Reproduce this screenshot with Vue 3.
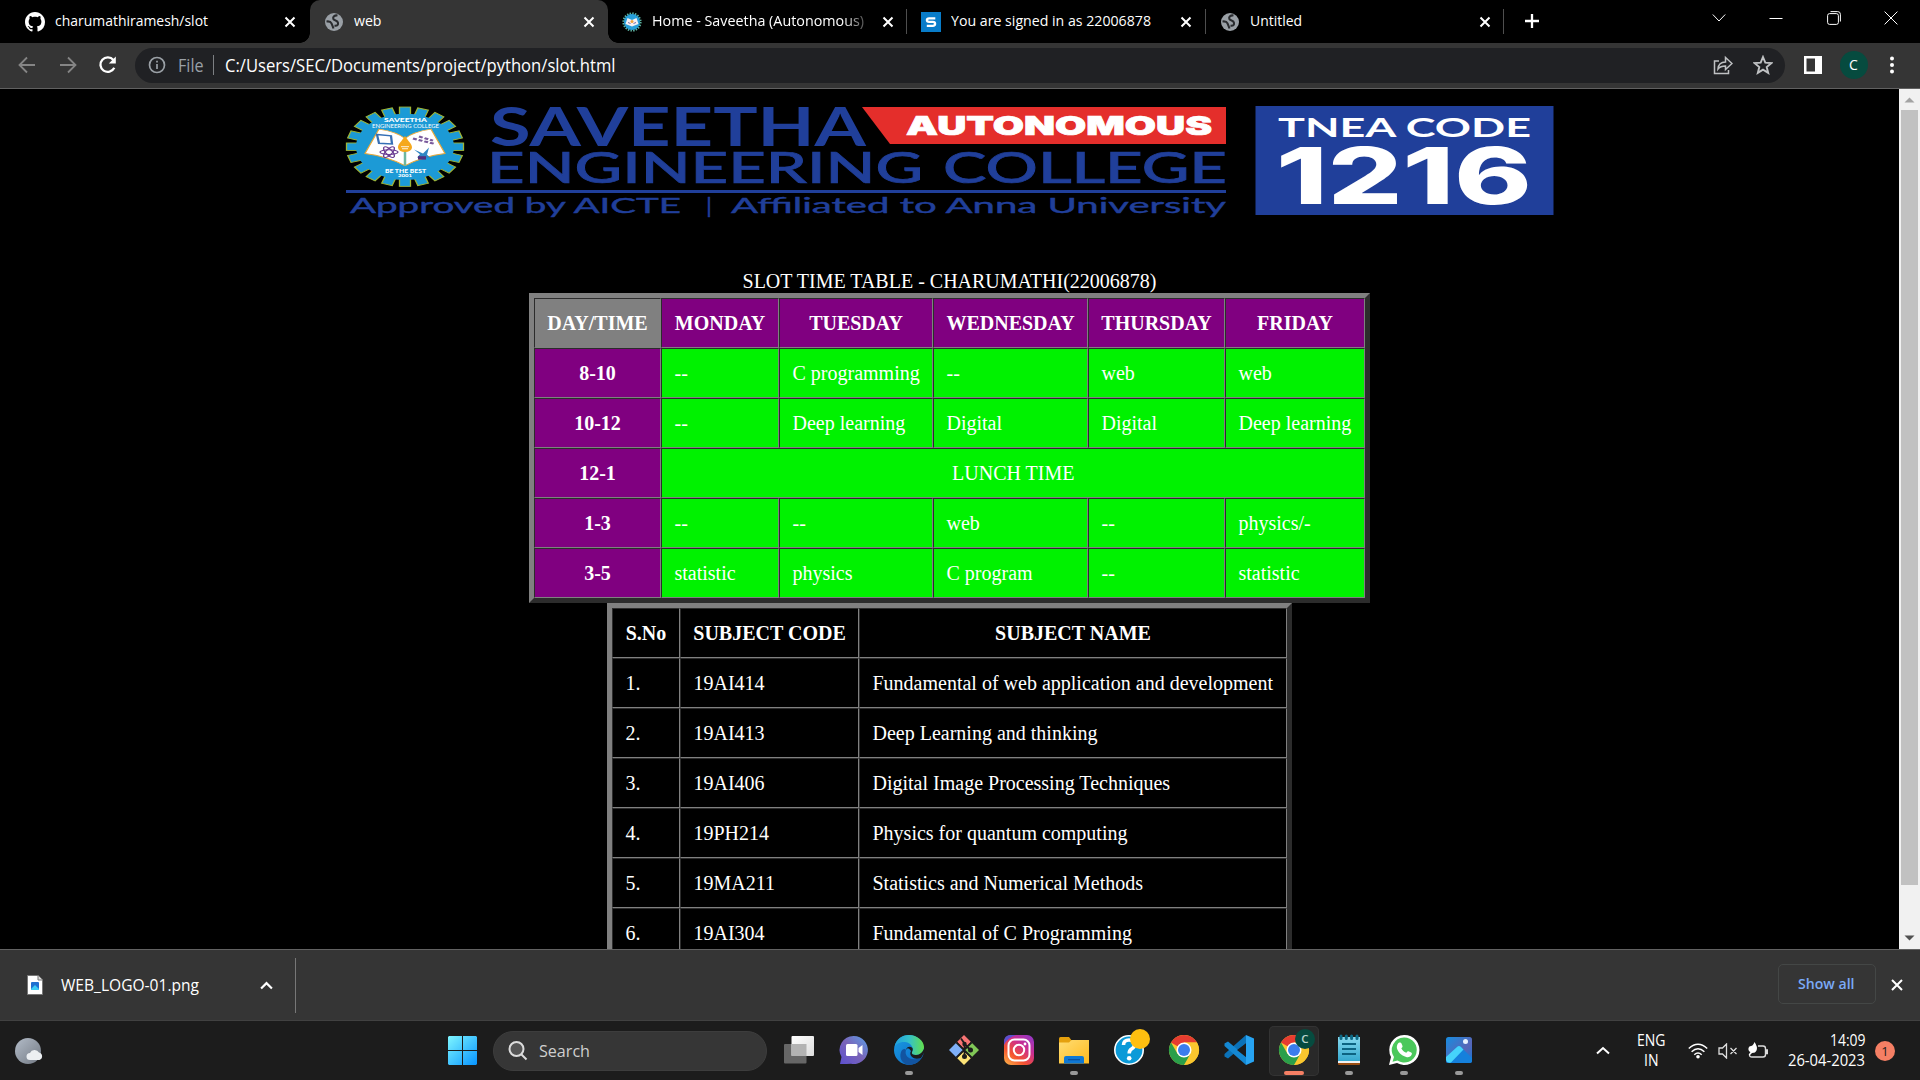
<script setup>
import { h } from 'vue'

// Single-line label whose rendered width is fixed, so UI captions never reflow.
const Label = (p) =>
  h('svg', { width: p.w, height: 24, viewBox: `0 0 ${p.w} 24`, style: { display: 'block', flex: 'none', overflow: 'visible' } }, [
    h('text', {
      x: 0, y: p.y || 17, textLength: p.w, lengthAdjust: 'spacingAndGlyphs',
      'font-size': p.size || 15, 'font-weight': p.weight || 400, fill: p.fill || '#fff',
      'font-family': "'Open Sans', 'Noto Sans', sans-serif"
    }, p.text)
  ])
Label.props = ['text', 'w', 'size', 'weight', 'fill', 'y']

const tabs = [
  { icon: 'github', title: 'charumathiramesh/slot', w: 153 },
  { icon: 'globe', title: 'web', w: 27.5, active: true },
  { icon: 'gear', title: 'Home - Saveetha (Autonomous)', w: 212, fade: true },
  { icon: 's', title: 'You are signed in as 22006878', w: 200, sep: true },
  { icon: 'globe', title: 'Untitled', w: 52, sep: true }
]

const days = ['MONDAY', 'TUESDAY', 'WEDNESDAY', 'THURSDAY', 'FRIDAY']
const slots = [
  ['8-10', '--', 'C programming', '--', 'web', 'web'],
  ['10-12', '--', 'Deep learning', 'Digital', 'Digital', 'Deep learning'],
  ['12-1', 'LUNCH TIME'],
  ['1-3', '--', '--', 'web', '--', 'physics/-'],
  ['3-5', 'statistic', 'physics', 'C program', '--', 'statistic']
]
const slotCols = [127, 118, 154, 155, 137, 140]
const subjectCols = [68, 179, 428]
const subjects = [
  ['1.', '19AI414', 'Fundamental of web application and development'],
  ['2.', '19AI413', 'Deep Learning and thinking'],
  ['3.', '19AI406', 'Digital Image Processing Techniques'],
  ['4.', '19PH214', 'Physics for quantum computing'],
  ['5.', '19MA211', 'Statistics and Numerical Methods'],
  ['6.', '19AI304', 'Fundamental of C Programming']
]

const teeth = Array.from({ length: 20 }, (_, i) => i * 18)

const apps = [
  { id: 'taskview' }, { id: 'teams' }, { id: 'edge', run: true }, { id: 'git' },
  { id: 'insta' }, { id: 'folder', run: true }, { id: 'help' }, { id: 'chrome' },
  { id: 'code' }, { id: 'chrome', active: true }, { id: 'notes', run: true },
  { id: 'whatsapp', run: true }, { id: 'photos', run: true }
]
</script>

<template>
  <div class="screen">
    <header class="strip">
      <div v-for="(t, i) in tabs" :key="i" class="tab" :class="{ active: t.active, sep: t.sep }">
        <svg v-if="t.icon === 'github'" class="fav" viewBox="0 0 16 16" fill="#fff"><path d="M8 0C3.58 0 0 3.58 0 8c0 3.54 2.29 6.53 5.47 7.59.4.07.55-.17.55-.38 0-.19-.01-.82-.01-1.49-2.01.37-2.53-.49-2.69-.94-.09-.23-.48-.94-.82-1.13-.28-.15-.68-.52-.01-.53.63-.01 1.08.58 1.23.82.72 1.21 1.87.87 2.33.66.07-.52.28-.87.51-1.07-1.78-.2-3.64-.89-3.64-3.95 0-.87.31-1.59.82-2.15-.08-.2-.36-1.02.08-2.12 0 0 .67-.21 2.2.82.64-.18 1.32-.27 2-.27s1.36.09 2 .27c1.53-1.04 2.2-.82 2.2-.82.44 1.1.16 1.92.08 2.12.51.56.82 1.27.82 2.15 0 3.07-1.87 3.75-3.65 3.95.29.25.54.73.54 1.48 0 1.07-.01 1.93-.01 2.2 0 .21.15.46.55.38A8 8 0 0 0 16 8c0-4.42-3.58-8-8-8Z" /></svg>
        <svg v-else-if="t.icon === 'globe'" class="fav" viewBox="0 0 20 20"><circle cx="10" cy="10" r="9" fill="#9aa0a6" /><path d="M2.500 9.500Q6.500 9 7.500 11.300T9.500 16.500M13.500 3.500C11 3 8.500 4.500 9.300 6.800S13.600 8 14 10.800 12.500 14 10.500 13.500" fill="none" stroke="#2a2c2f" stroke-width="2.100" /></svg>
        <svg v-else-if="t.icon === 'gear'" class="fav" viewBox="0 0 20 20"><circle cx="10" cy="10" r="8.600" fill="none" stroke="#5cb3a0" stroke-width="2" stroke-dasharray="1.500 1.200" /><circle cx="10" cy="10" r="8" fill="#279fda" /><path d="m3.500 12 2-6L10 8l4.500-2 2 6-6.500 2.500z" fill="#f6f0f2" /><circle cx="10" cy="9.500" r="1.500" fill="#f2a43a" /><path d="M6 10.500l2.500 1M14 10.500l-2.500 1" stroke="#7a6ba8" /></svg>
        <svg v-else class="fav" viewBox="0 0 20 20"><rect width="20" height="20" fill="#087cc9" /><path d="M14.300 6.300H8.200c-1.500 0-2.300.6-2.300 1.800s.8 1.800 2.200 1.800h3.800c1.400 0 2.200.6 2.200 1.900s-.9 2-2.400 2H5.800" fill="none" stroke="#fff" stroke-width="2.300" /></svg>
        <div class="title" :class="{ fade: t.fade }"><Label :text="t.title" :w="t.w" :y="16.300" /></div>
        <svg class="x" viewBox="0 0 12 12"><path d="M1.500 1.500l9 9M10.500 1.500l-9 9" /></svg>
      </div>
      <svg class="plus" viewBox="0 0 16 16"><path d="M8 1v14M1 8h14" /></svg>
      <div class="win">
        <svg viewBox="0 0 14 14"><path d="M.8 3.500 7 10l6.200-6.500" /></svg>
        <svg viewBox="0 0 14 14"><path d="M.5 7.500h13" /></svg>
        <svg viewBox="0 0 14 14"><rect x=".6" y="2.600" width="10.800" height="10.800" rx="2" /><path d="M3.500.6h7.200q2.700 0 2.700 2.700v7.200" /></svg>
        <svg viewBox="0 0 14 14"><path d="M.6.6l12.800 12.800M13.400.6.6 13.400" /></svg>
      </div>
    </header>

    <div class="toolbar">
      <svg class="nav dim" viewBox="0 0 20 20"><path d="M18 10H3M10 2.500 2.500 10l7.500 7.500" /></svg>
      <svg class="nav dim" viewBox="0 0 20 20"><path d="M2 10h15M10 2.500l7.500 7.500-7.500 7.500" /></svg>
      <svg class="nav" viewBox="0 0 20 20"><path d="M16.300 12.800A7.300 7.300 0 1 1 15.400 5" stroke-width="2.300" /><path d="M17.800 1.500v7h-7z" fill="#fff" stroke="none" /></svg>
      <div class="omni">
        <svg class="info" viewBox="0 0 18 18"><circle cx="9" cy="9" r="7.500" /><path d="M9 8v5M9 4.800v1.800" /></svg>
        <Label text="File" :w="25.500" :size="17.500" :y="18.500" fill="#9aa0a6" />
        <i class="bar"></i>
        <Label text="C:/Users/SEC/Documents/project/python/slot.html" :w="390.500" :size="17.500" :y="18.500" />
        <svg class="share" viewBox="0 0 20 20"><path d="M6 6H1.500v12.500h14V15" /><path d="M5 14c.4-5 3.500-7 7.500-7V2.500L19 8.500l-6.500 6V11c-3 0-5.500.5-7.500 3z" /></svg>
        <svg class="star" viewBox="0 0 20 20"><path d="m10 2 2.300 5.600 6 .5-4.600 3.900 1.500 5.900L10 14.700l-5.200 3.200L6.300 12 1.700 8.100l6-.5z" /></svg>
      </div>
      <svg class="panel" viewBox="0 0 18 18"><path fill="#fff" fill-rule="evenodd" d="M0 0h18v18H0zM2.500 2.500v13h8.500v-13z" /></svg>
      <span class="avatar">C</span>
      <svg class="dots" viewBox="0 0 4 18"><circle cx="2" cy="2.500" r="2" /><circle cx="2" cy="9" r="2" /><circle cx="2" cy="15.500" r="2" /></svg>
    </div>

    <div class="view">
      <main class="page">
        <svg class="banner" viewBox="345 105 1210 114" width="1210" height="114">
          <g transform="translate(405 146.700) scale(1 .678)">
            <rect v-for="a in teeth" :key="a" x="-5.500" y="-58.500" width="11" height="15" :transform="`rotate(${a})`" fill="#1c9ad6" stroke="#9fb536" stroke-width="1.300" />
            <circle r="49" fill="#1c9ad6" />
            <path d="M-40 10-26-26Q-8-22 0-12 8-22 26-26L40 10Q18 14 0 28-18 14-40 10z" fill="#fff" stroke="#e8a83a" stroke-width="1.200" />
            <path d="M0-12V28" stroke="#6db7a0" stroke-width="2.500" />
            <path d="M0-16C3-8 7-4 7 1A7 7 0 0 1-7 1C-7-4-3-8 0-16z" fill="#f5a81c" />
            <path d="M-4 0h8M-3 3h6" stroke="#fff" />
            <path d="m-28-18 14 2 1 12-13-1z" fill="#fff" stroke="#356fb5" stroke-width="2.300" />
            <g fill="none" stroke="#6c3d93" stroke-width="1.400"><ellipse cx="-16" cy="8" rx="9" ry="3.500" /><ellipse cx="-16" cy="8" rx="9" ry="3.500" transform="rotate(60 -16 8)" /><ellipse cx="-16" cy="8" rx="9" ry="3.500" transform="rotate(120 -16 8)" /></g>
            <path d="M8-12l22 8M14-15l14 6" stroke="#7a5a9c" stroke-width="3" stroke-dasharray="4 2" />
            <path d="m9 4 9 6 6-9-2 11 4 5-14-1 3-5z" fill="#2f86c4" /><path d="M13 14h8v5h-8z" fill="#51307f" />
          </g>
          <g fill="#fff" font-family="Lato, sans-serif" font-weight="900">
            <text x="384" y="122.300" font-size="6.200" textLength="43" lengthAdjust="spacingAndGlyphs">SAVEETHA</text>
            <text x="372" y="127.600" font-size="4.800" font-weight="400" textLength="67" lengthAdjust="spacingAndGlyphs">ENGINEERING COLLEGE</text>
            <text x="385" y="172.500" font-size="5" textLength="41" lengthAdjust="spacingAndGlyphs">BE THE BEST</text>
            <text x="398" y="177" font-size="4.500" textLength="14" lengthAdjust="spacingAndGlyphs">2001</text>
          </g>
          <g fill="#203f9a" font-family="Lato, sans-serif">
            <text x="490" y="145.600" font-size="53" font-weight="700" textLength="376" lengthAdjust="spacingAndGlyphs">SAVEETHA</text>
            <g font-size="43" font-weight="500" stroke="#203f9a" stroke-width=".7">
              <text x="487" y="182.800" textLength="436" lengthAdjust="spacingAndGlyphs">ENGINEERING</text>
              <text x="943" y="182.800" textLength="284" lengthAdjust="spacingAndGlyphs">COLLEGE</text>
            </g>
            <rect x="346" y="190" width="880" height="3" />
            <g font-size="20.500" stroke="#203f9a" stroke-width=".4">
              <text x="350" y="212.500" textLength="331" lengthAdjust="spacingAndGlyphs">Approved by AICTE</text>
              <text x="706" y="212.500" textLength="6" lengthAdjust="spacingAndGlyphs">|</text>
              <text x="731" y="212.500" textLength="495" lengthAdjust="spacingAndGlyphs">Affiliated to Anna University</text>
            </g>
          </g>
          <path d="M862 107h364v37H890z" fill="#e42e2b" />
          <text x="906" y="134.800" font-size="26" font-weight="900" font-family="Inter, sans-serif" fill="#fff" stroke="#fff" stroke-width=".7" textLength="306" lengthAdjust="spacingAndGlyphs">AUTONOMOUS</text>
          <rect x="1255.500" y="106" width="298" height="109" fill="#203f9a" />
          <text x="1278" y="136.800" font-size="26" font-weight="700" font-family="Lato, sans-serif" fill="#fff" textLength="253" lengthAdjust="spacingAndGlyphs">TNEA CODE</text>
          <text x="1276" y="203.500" font-size="78" font-weight="800" font-family="Inter, sans-serif" fill="#fff" textLength="256" lengthAdjust="spacingAndGlyphs">1216</text>
        </svg>

        <table class="slots">
          <caption>SLOT TIME TABLE - CHARUMATHI(22006878)</caption>
          <colgroup><col v-for="(w, i) in slotCols" :key="i" :style="{ width: w + 'px' }" /></colgroup>
          <tbody>
            <tr><th class="corner">DAY/TIME</th><th v-for="d in days" :key="d">{{ d }}</th></tr>
            <tr v-for="r in slots" :key="r[0]">
              <th>{{ r[0] }}</th>
              <td v-for="(c, i) in r.slice(1)" :key="i" :colspan="r.length === 2 ? 5 : 1" :class="{ lunch: r.length === 2 }">{{ c }}</td>
            </tr>
          </tbody>
        </table>

        <table class="subjects">
          <colgroup><col v-for="(w, i) in subjectCols" :key="i" :style="{ width: w + 'px' }" /></colgroup>
          <tbody>
            <tr><th>S.No</th><th>SUBJECT CODE</th><th>SUBJECT NAME</th></tr>
            <tr v-for="r in subjects" :key="r[0]"><td v-for="c in r" :key="c">{{ c }}</td></tr>
          </tbody>
        </table>
      </main>
      <div class="scroll">
        <svg viewBox="0 0 21 21"><path d="M5.500 13.500h10l-5-5z" fill="#a3a3a3" /></svg>
        <i></i>
        <svg viewBox="0 0 21 21"><path d="M5.500 7.500h10l-5 5z" fill="#505050" /></svg>
      </div>
    </div>

    <div class="downloads">
      <svg class="file" viewBox="0 0 16 20"><path d="M.5.5h10.500l4.500 4.500v14.500H.5z" fill="#fff" stroke="#777" /><path d="M11 .5v4.500h4.500" fill="#ddd" stroke="#777" /><rect x="4" y="7" width="8" height="8" rx="1" fill="#1f6fd0" /><path d="m4 14 4-4 4 4v1H4z" fill="#3ccbf4" /></svg>
      <Label text="WEB_LOGO-01.png" :w="138" :size="16" :y="18" />
      <svg class="up" viewBox="0 0 12 8"><path d="M1 6.800 6 1.800l5 5" /></svg>
      <i class="split"></i>
      <button class="all"><Label text="Show all" :w="56.500" :size="14.500" :weight="600" :y="16.500" fill="#7baaf7" /></button>
      <svg class="x" viewBox="0 0 12 12"><path d="M1 1l10 10M11 1 1 11" /></svg>
    </div>

    <footer class="taskbar">
      <svg class="weather" viewBox="0 0 28 26"><defs><linearGradient id="moon" x2="1" y2="1"><stop stop-color="#b3bcc8" /><stop offset="1" stop-color="#737a84" /></linearGradient></defs><circle cx="13" cy="13" r="13" fill="url(#moon)" /><path d="M15 22a3.500 3.500 0 0 1 0-7 5 5 0 0 1 9-.5A3.900 3.900 0 0 1 24.500 22z" fill="#eceff2" /></svg>
      <svg class="start" viewBox="0 0 29 29"><defs><linearGradient id="win" x2="1" y2="1"><stop stop-color="#7ff6ff" /><stop offset="1" stop-color="#0794ff" /></linearGradient></defs><path fill="url(#win)" d="M1 0h13v14H0V1zM15 0h13l1 1v13H15zM0 15h14v14H1l-1-1zM15 15h14v13l-1 1H15z" /></svg>
      <div class="search">
        <svg viewBox="0 0 20 20"><circle cx="8.500" cy="8" r="7" fill="#555" /><path d="m13.500 13.500 5 5" /></svg>
        <Label text="Search" :w="51" :size="17" :y="18" fill="#cfcfcf" />
      </div>
      <div class="apps">
        <div v-for="(a, i) in apps" :key="i" class="app" :class="{ active: a.active, run: a.run }">
          <svg viewBox="0 0 30 30">
            <defs>
              <linearGradient id="tv" x2="1" y2="1"><stop stop-color="#fff" /><stop offset="1" stop-color="#ddd" /></linearGradient>
              <linearGradient id="tm" x1="1" x2="0" y2="1"><stop stop-color="#5aa0e8" /><stop offset=".5" stop-color="#7a64b8" /><stop offset="1" stop-color="#5b4fd0" /></linearGradient>
              <linearGradient id="e1" x2="1"><stop stop-color="#1f9fe0" /><stop offset=".5" stop-color="#35c1c8" /><stop offset="1" stop-color="#63e04b" /></linearGradient>
              <linearGradient id="e2" x2="1" y2="1"><stop stop-color="#1b9de2" /><stop offset="1" stop-color="#0a66c8" /></linearGradient>
              <linearGradient id="ig" x1="0" y1="1" x2=".8" y2="0"><stop stop-color="#fdbb4a" /><stop offset=".35" stop-color="#f5542f" /><stop offset=".7" stop-color="#cb2e90" /><stop offset="1" stop-color="#9a36c0" /></linearGradient>
              <linearGradient id="fo" x2="1" y2="1"><stop stop-color="#ffdd73" /><stop offset="1" stop-color="#ffba1f" /></linearGradient>
              <linearGradient id="no" x2="0" y2="1"><stop stop-color="#86d8ee" /><stop offset="1" stop-color="#35a9cf" /></linearGradient>
              <linearGradient id="ph" x2="1" y2="1"><stop stop-color="#168de0" /><stop offset=".6" stop-color="#5866b8" /><stop offset="1" stop-color="#1476d6" /></linearGradient>
            </defs>
            <g v-if="a.id === 'taskview'"><rect y="9" width="22.500" height="19.500" rx="1" fill="#666" /><rect x="7.500" y="1" width="22.500" height="20" rx="1" fill="url(#tv)" /><path d="M7.500 9h15v12h-15z" fill="#b3b3b3" /></g>
            <g v-else-if="a.id === 'teams'"><path d="M15 1a14 14 0 1 1-3 27.700Q8 29 1 29L2.500 22A14 14 0 0 1 15 1z" fill="url(#tm)" /><rect x="7" y="9" width="11.500" height="12" rx="1.500" fill="#fff" /><path d="m19.500 13 4-3v10l-4-3z" fill="#fff" /></g>
            <g v-else-if="a.id === 'edge'"><circle cx="15" cy="15" r="15" fill="url(#e2)" /><path d="M12 15c-2 6 4 12 15 8-3 5-8 7-12 7C8 29 5 23 7 17c1-3 4-4 5-2z" fill="#1254a0" /><path d="M.5 12C2 4 8 0 15 0c8 0 15 6 15 12 0 5-4 8-8 8-3 0-5-1-4-3 2-3 0-9-7-10C6 6.500 2 9 .5 12z" fill="url(#e1)" /><path d="M30 18 27 23q-6 2-9-1-3-3-1-6-3-5-5-1 1-4 5-3 3 1 1 5-1 3 4 3 5 0 8-6z" fill="#1c1c1c" /></g>
            <g v-else-if="a.id === 'git'"><path d="m15 0 7 7-7 7-7-7z" fill="#f87474" /><path d="m7.500 7.500 7 7.500-7 7.500L0 15z" fill="#7fb0f8" /><path d="m22.500 7.500 7.500 7.500-7.500 7.500L15 15z" fill="#81c857" /><path d="m15 16 7 7-7 7-7-7z" fill="#fde377" /><path d="m7.500 7.500 15 15M22.500 7.500l-15 15M12 3.500l3.500 5V22M15.500 9l6 6" stroke="#1c1c1c" stroke-width="1.800" fill="none" /><circle cx="15.500" cy="21.500" r="2.500" fill="#1c1c1c" /><circle cx="15.500" cy="9" r="2.200" fill="#1c1c1c" /><circle cx="21.500" cy="15" r="2.500" fill="#1c1c1c" /></g>
            <g v-else-if="a.id === 'insta'"><rect width="30" height="30" rx="7" fill="url(#ig)" /><path d="M0 10V7Q0 0 7 0h5Q3 3 0 10z" fill="#5b50cf" /><g fill="none" stroke="#fff" stroke-width="2"><rect x="4.500" y="4.500" width="21" height="21" rx="6" /><circle cx="15" cy="15" r="5.200" /></g><circle cx="21" cy="9" r="1.400" fill="#fff" /></g>
            <g v-else-if="a.id === 'folder'"><path d="M0 3.500Q0 2 1.500 2H10l3 4v5H0z" fill="#e5a00d" /><path d="M0 7.500h10L12.500 5H30v23.500H0z" fill="url(#fo)" /><path d="M5 28.500V23q0-2 2-2h16q2 0 2 2v5.500z" fill="#0f78d4" /><path d="M9 24.700h12" stroke="#0b4f9c" stroke-width="1.200" /></g>
            <g v-else-if="a.id === 'help'"><circle cx="15" cy="15" r="14.200" fill="#0b9ad8" stroke="#fff" stroke-width="1.600" /><path d="M9.500 10q0-5 5.500-5t5.500 4.800q0 2.500-3 4.200-2.300 1.300-2.300 4.500" fill="none" stroke="#fff" stroke-width="3.600" /><circle cx="15.200" cy="23.200" r="2.300" fill="#fff" /><circle cx="26" cy="4" r="10" fill="#ffbf10" /></g>
            <g v-else-if="a.id === 'chrome'"><circle cx="15" cy="15" r="15" fill="#fbc72e" /><path d="M15 15h0L2 7.500A15 15 0 0 1 28 7.500H15z" fill="#e63c30" /><path d="M15 30A15 15 0 0 1 2 7.500L8.500 18.700 15 22.500h6.500L15 30z" fill="#2a9f4a" /><path d="M21.500 18.700 15 30l-1-7.500z" fill="#2a9f4a" /><path d="M15 7.500h13A15 15 0 0 1 15 30l6.500-11.300z" fill="#fbc72e" /><circle cx="15" cy="15" r="7.500" fill="#fff" /><circle cx="15" cy="15" r="6" fill="#3b7ded" /><template v-if="a.active"><circle cx="26" cy="4" r="10" fill="#064b3f" /><text x="26" y="8" font-family="Open Sans, sans-serif" font-size="11.500" font-weight="600" text-anchor="middle" fill="#b9d4cd">C</text></template></g>
            <g v-else-if="a.id === 'code'"><path d="m22 0 .5 8L4 23.500.5 21.500V19z" fill="#0b72b8" /><path d="m22 30 .5-8L4 6.500.5 8.500V11z" fill="#1488d3" /><path d="M22.500 8v14.500L13 15z" fill="#1c1c1c" /><path d="M22 0 30 3.500v23L22 30z" fill="#27a4f2" /></g>
            <g v-else-if="a.id === 'notes'"><rect x="4" y="25" width="22" height="5" rx="1" fill="#9a4d12" /><path d="M4 25h22v3H4z" fill="#f1f1f1" /><path d="M4 2h22v24H4z" fill="url(#no)" /><path d="M7 1v2.500M12.300 1v2.500M17.600 1v2.500M23 1v2.500" stroke="#0e6a86" stroke-width="3" stroke-linecap="round" /><path d="M8 9h14M8 14h14M8 19h14" stroke="#0d6381" stroke-width="1.800" /></g>
            <g v-else-if="a.id === 'whatsapp'"><path d="M15 0a15 15 0 1 1-7 28L0 30l2-8A15 15 0 0 1 15 0z" fill="#fff" /><path d="M15 2.500a12.500 12.500 0 1 1-6.500 23L3.500 26.800 5 22A12.500 12.500 0 0 1 15 2.500z" fill="#4bc85b" /><path d="M10.500 7.500c1-.3 1.500 0 2 1l1 2.500c.2.800-.3 1.500-1.200 2.300 1.200 2.200 2.500 3.500 5 4.500.8-1 1.400-1.800 2.200-1.500l2.700 1.300c.8.500.8 1 .5 2-1 2.500-3.500 3-5.500 2.400C12 20.500 9 17 8 13.500c-.5-2.500.5-5.500 2.500-6z" fill="#fff" /></g>
            <g v-else><rect x="2" y="2" width="26" height="26" rx="2.500" fill="url(#ph)" /><path d="M2 24 13 12q2-2 4 0l11 11v2.500q0 2.500-2.500 2.500h-21Q2 28 2 25.500z" fill="#1580dc" /><path d="M2 22 13 12q2-2 4 0l2.500 2.500L7 27.500Q3 28.500 2 25z" fill="#45d3fb" /><circle cx="21.500" cy="6.500" r="2.500" fill="#e8f2ff" /></g>
          </svg>
        </div>
      </div>
      <svg class="up tray" viewBox="0 0 14 8"><path d="M1 7l6-5.500L13 7" /></svg>
      <div class="lang"><Label text="ENG" :w="28.500" :size="15.500" /><Label text="IN" :w="14.500" :size="15.500" /></div>
      <svg class="wifi" viewBox="0 0 20 16"><path d="M.8 5.500q9.200-8.500 18.400 0M3.600 8.700q6.400-6 12.800 0M6.300 11.700q3.700-3.400 7.400 0" /><circle cx="10" cy="13.700" r="1.800" fill="#fff" stroke="none" /></svg>
      <svg class="vol" viewBox="0 0 20 16"><path d="M1 5h3.500l4-4v14l-4-4H1zM12.500 5l6 6M18.500 5l-6 6" /></svg>
      <svg class="bat" viewBox="0 0 20 17"><path d="M10 4h5q2.500 0 2.500 2.500v6q0 2.500-2.500 2.500H4q-2.500 0-2.500-2.200M18.500 8v3.500h1V8z" /><path d="M6.500 0Q10 5 8.500 8.500 7.500 11 4 11l-2.500 2.500-.8-1L2.500 10Q0 9 .5 6 1 4 3 4q2 0 3.500-4z" fill="#fff" stroke="none" /></svg>
      <div class="clock"><Label text="14:09" :w="35.500" :size="15.500" /><Label text="26-04-2023" :w="77" :size="15.500" /></div>
      <span class="count">1</span>
    </footer>
  </div>
</template>

<style>
body { background: #000; overflow: hidden; }
</style>

<style scoped>
.screen { width: 1920px; height: 1080px; display: flex; flex-direction: column; overflow: hidden; background: #000; color: #fff; }
svg { flex: none; display: block; }

.strip { height: 43px; flex: none; display: flex; padding-left: 11px; }
.tab { position: relative; width: 298.7px; height: 43px; flex: none; display: flex; align-items: center; padding: 0 15px 0 14px; box-sizing: border-box; }
.tab.active { background: #353535; border-radius: 10px 10px 0 0; }
.tab.active::before, .tab.active::after { content: ''; position: absolute; bottom: 0; width: 10px; height: 10px; }
.tab.active::before { left: -10px; background: radial-gradient(circle at 0 0, transparent 9.5px, #353535 10px); }
.tab.active::after { right: -10px; background: radial-gradient(circle at 100% 0, transparent 9.5px, #353535 10px); }
.tab.sep::before, .tab.sep:nth-child(5)::after { content: ''; position: absolute; left: -1px; top: 9px; width: 1px; height: 25px; background: #4e4e4e; }
.tab.sep:nth-child(5)::after { left: auto; right: 0; }
.fav { width: 20px; height: 20px; margin-right: 10px; }
.title { flex: 1; overflow: hidden; }
.fade { -webkit-mask-image: linear-gradient(90deg, #000 190px, transparent 222px); mask-image: linear-gradient(90deg, #000 190px, transparent 222px); }
.x { width: 12px; height: 12px; fill: none; stroke: #fff; stroke-width: 2; }
.tab .x { margin-right: -1.500px; }
.plus { width: 16px; height: 16px; margin: 13px 0 0 20px; stroke: #fff; stroke-width: 2.3; }
.win { margin-left: auto; margin-right: 22px; display: flex; gap: 43.300px; padding-top: 11px; }
.win svg { width: 14px; height: 14px; fill: none; stroke: #fff; stroke-width: 1; }

.toolbar { height: 46px; flex: none; box-sizing: border-box; background: #353535; border-bottom: 1px solid #616161; display: flex; align-items: center; padding: 0 26px 1px 17px; }
.nav { width: 20px; height: 20px; margin-right: 20.500px; fill: none; stroke: #fff; stroke-width: 1.8; }
.nav.dim { stroke: #858585; }
.omni { width: 1649.5px; height: 35px; margin-left: -3.500px; border-radius: 18px; background: #202124; display: flex; align-items: center; box-sizing: border-box; padding: 0 12px 0 13px; }
.info { width: 18px; height: 18px; margin-right: 12px; fill: none; stroke: #9aa0a6; stroke-width: 1.7; }
.bar { width: 1.5px; height: 20px; background: #7d8083; margin: 0 11px 0 9px; }
.share, .star { width: 20px; height: 20px; fill: none; stroke: #bfc1c3; stroke-width: 1.5; }
.share { margin-left: auto; margin-right: 20px; }
.star { stroke-width: 1.9; }
.panel { width: 18px; height: 18px; margin-left: 19px; }
.avatar { width: 28px; height: 28px; margin-left: 18px; border-radius: 50%; background: #064b3f; font: 14px/28px 'Open Sans', sans-serif; text-align: center; }
.dots { width: 4px; height: 18px; margin-left: auto; fill: #fff; }

.view { height: 860px; flex: none; display: flex; overflow: hidden; }
.page { width: 1899px; height: 860px; overflow: hidden; font: 20px/23px 'Liberation Serif', 'Times New Roman', serif; }
.banner { margin: 16px 0 51px 345px; overflow: visible; }
table { box-sizing: border-box; table-layout: fixed; border: 5px solid; border-color: #808080 #2c2c2c #2c2c2c #808080; border-spacing: 0; margin: 0 auto; }
.slots { width: 841px; }
.subjects { width: 685px; }
caption { height: 23px; white-space: nowrap; }
th, td { height: 50px; box-sizing: border-box; padding: 1px 12px 0 12.500px; border: 1px solid; border-color: #2c2c2c #808080 #808080 #2c2c2c; white-space: nowrap; text-align: left; }
th { text-align: center; padding: 1px 0 0; }
.slots th { background: #800080; }
.slots .corner { background: #808080; }
.slots td { background: #00f200; }
.slots .lunch { text-align: center; }
.scroll { width: 21px; height: 860px; background: #f1f1f1; display: flex; flex-direction: column; }
.scroll svg { width: 21px; height: 21px; }
.scroll i { height: 775px; width: 17px; margin: 0 2px 43px; background: #c1c1c1; }

.downloads { height: 71px; flex: none; box-sizing: border-box; background: #353535; border-top: 1px solid #626262; display: flex; align-items: center; padding: 0 17px 0 27px; }
.file { width: 16px; height: 20px; margin-right: 18px; }
.up { width: 13px; height: 9px; margin-left: 61px; fill: none; stroke: #fff; stroke-width: 2; }
.split { width: 1px; height: 55px; margin-left: 22px; background: #777; }
.all { width: 98px; height: 40px; margin: 0 15px 2px auto; padding: 0 0 0 19px; background: none; border: 1px solid #444746; border-radius: 5px; box-sizing: border-box; }
.downloads .x { margin-bottom: 1px; }

.taskbar { height: 60px; flex: none; box-sizing: border-box; background: #1c1c1c; border-top: 1px solid #414141; display: flex; align-items: center; padding-left: 15px; }
.weather { width: 28px; height: 26px; }
.start { width: 29px; height: 29px; margin-left: 405px; }
.search { width: 274px; height: 40px; margin-left: 16px; border-radius: 20px; background: #363636; border: 1px solid #3d3d3d; box-sizing: border-box; display: flex; align-items: center; padding-left: 13.500px; gap: 11.500px; }
.search svg:first-child { width: 20px; height: 20px; fill: none; stroke: #dcdcdc; stroke-width: 2; }
.apps { display: flex; gap: 5px; margin-left: 7px; }
.app { position: relative; width: 50px; height: 50px; border-radius: 5px; display: flex; align-items: center; justify-content: center; box-sizing: border-box; }
.app > svg { width: 30px; height: 30px; overflow: visible; margin-top: -1px; }
.app.active { background: #292929; box-shadow: inset 0 0 0 1px #333; }
.app.run::after, .app.active::after { content: ''; position: absolute; left: 21px; bottom: 1px; width: 8px; height: 4px; border-radius: 2px; background: #999; }
.app.active::after { left: 15px; width: 20px; background: #f57f64; }
.up.tray { width: 14px; height: 9px; margin-left: 112px; }
.lang { width: 30px; margin-left: 26px; display: flex; flex-direction: column; align-items: center; gap: -4px; }
.lang > *, .clock > * { margin: -2px 0; }
.wifi { width: 20px; height: 16px; margin-left: 22px; fill: none; stroke: #fff; stroke-width: 1.5; }
.vol { width: 20px; height: 16px; margin-left: 10px; fill: none; stroke: #ddd; stroke-width: 1.3; }
.bat { width: 20px; height: 17px; margin-left: 10px; fill: none; stroke: #ddd; stroke-width: 1.4; }
.clock { width: 77px; margin-left: 20px; display: flex; flex-direction: column; align-items: flex-end; }
.count { width: 20px; height: 20px; margin-left: 10px; border-radius: 50%; background: #f57f64; color: #222; font: 13px/20px 'Open Sans', sans-serif; text-align: center; }
</style>
